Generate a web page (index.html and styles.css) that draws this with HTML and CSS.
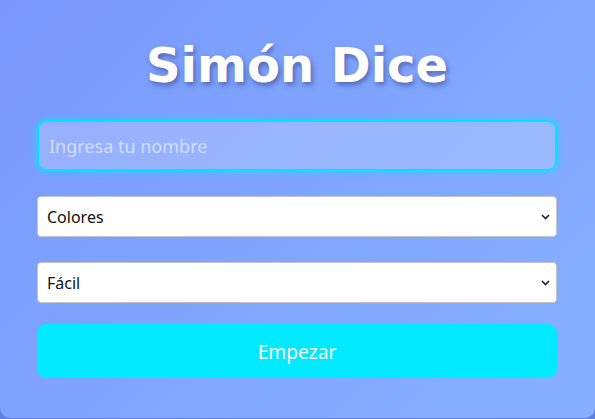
FILE: index.html
```html
<!DOCTYPE html>
<html lang="es">
<head>
<meta charset="utf-8">
<title>Simón Dice</title>
<link rel="stylesheet" href="styles.css">
</head>
<body>
<main class="card">
  <h1 class="title">Simón Dice</h1>
  <input class="name-input" type="text" placeholder="Ingresa tu nombre">
  <select class="field">
    <option>Colores</option>
  </select>
  <select class="field field-level">
    <option>Fácil</option>
  </select>
  <button class="start-btn">Empezar</button>
</main>
</body>
</html>
```

FILE: styles.css
```css
html, body {
  margin: 0;
  padding: 0;
  height: 100%;
}
body {
  background: #5f80dc;
  font-family: "Noto Sans", "Open Sans", sans-serif;
  overflow: hidden;
}
.card {
  box-sizing: border-box;
  height: 418px;
  background: linear-gradient(135deg, #7a98fc 0%, #80a6ff 55%, #87b0ff 100%);
  border-radius: 0 0 10px 10px;
  padding: 37px 38px 0 37px;
  display: flex;
  flex-direction: column;
}
.title {
  margin: 0 0 27px 0;
  text-align: center;
  font-family: "DejaVu Sans", sans-serif;
  font-weight: bold;
  font-size: 48px;
  line-height: 56px;
  color: #ffffff;
  text-shadow: 2px 3px 5px rgba(30, 40, 90, 0.45);
}
.name-input {
  box-sizing: border-box;
  height: 51px;
  width: 100%;
  margin: 0 0 25px 0;
  padding: 0 10px;
  border: 2px solid #00e5ff;
  border-radius: 9px;
  background: rgba(255, 255, 255, 0.2);
  box-shadow: 0 0 7px rgba(0, 229, 255, 0.7);
  font-family: "Noto Sans", "Open Sans", sans-serif;
  font-size: 18px;
  color: #ffffff;
  outline: none;
}
.name-input::placeholder {
  color: rgba(230, 236, 255, 0.75);
}
.field {
  -webkit-appearance: none;
  appearance: none;
  box-sizing: border-box;
  height: 41px;
  width: 100%;
  margin: 0 0 25px 0;
  padding: 0 24px 0 9px;
  border: 1px solid #c4c4c4;
  border-radius: 4px;
  background-color: #ffffff;
  background-image: url("data:image/svg+xml;utf8,<svg xmlns='http://www.w3.org/2000/svg' width='9' height='6' viewBox='0 0 9 6'><path d='M1 1 L4.5 4.5 L8 1' fill='none' stroke='%23222' stroke-width='1.6'/></svg>");
  background-repeat: no-repeat;
  background-position: right 6px center;
  background-size: 9px 6px;
  font-family: "Noto Sans", "Open Sans", sans-serif;
  font-size: 16px;
  color: #111111;
}
.field-level {
  margin-bottom: 21px;
}
.start-btn {
  box-sizing: border-box;
  height: 54px;
  width: 100%;
  border: none;
  border-radius: 9px;
  background: #00eaff;
  color: #ffffff;
  font-family: "Noto Sans", "Open Sans", sans-serif;
  font-size: 19.2px;
}
```
